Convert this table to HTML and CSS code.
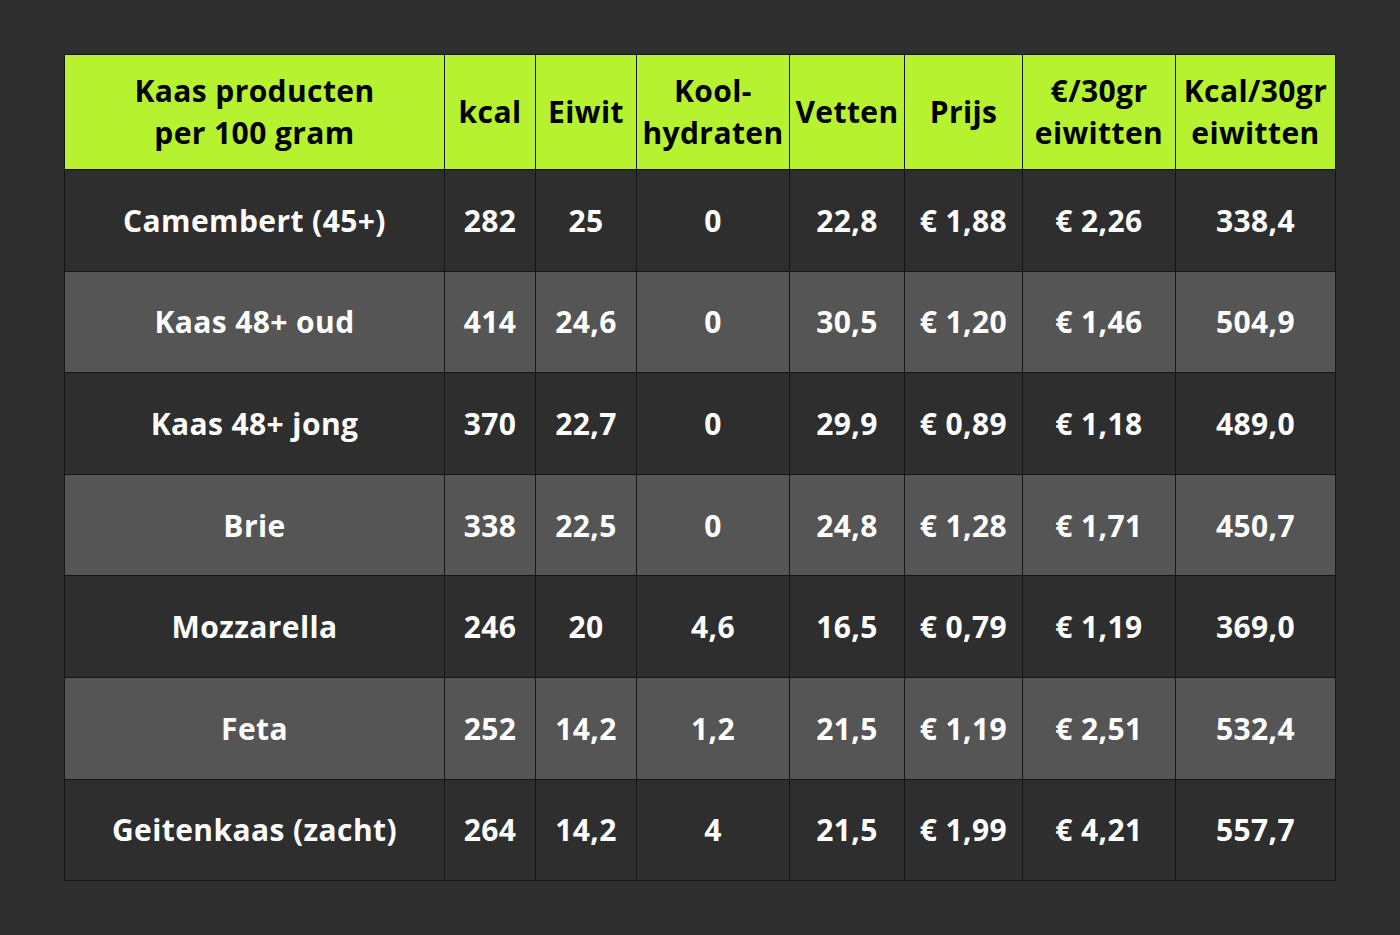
FILE: index.html
```html
<!DOCTYPE html>
<html lang="nl">
<head>
<meta charset="utf-8">
<title>Kaas producten</title>
<link rel="stylesheet" href="styles.css">
</head>
<body>
<div class="page">
<table class="cheese">
<colgroup>
<col class="c1"><col class="c2"><col class="c3"><col class="c4"><col class="c5"><col class="c6"><col class="c7"><col class="c8">
</colgroup>
<thead>
<tr>
<th>Kaas producten<br>per 100 gram</th>
<th>kcal</th>
<th>Eiwit</th>
<th>Kool-<br>hydraten</th>
<th>Vetten</th>
<th>Prijs</th>
<th>€/30gr<br>eiwitten</th>
<th>Kcal/30gr<br>eiwitten</th>
</tr>
</thead>
<tbody>
<tr class="dark"><td>Camembert (45+)</td><td>282</td><td>25</td><td>0</td><td>22,8</td><td>€ 1,88</td><td>€ 2,26</td><td>338,4</td></tr>
<tr class="light"><td>Kaas 48+ oud</td><td>414</td><td>24,6</td><td>0</td><td>30,5</td><td>€ 1,20</td><td>€ 1,46</td><td>504,9</td></tr>
<tr class="dark"><td>Kaas 48+ jong</td><td>370</td><td>22,7</td><td>0</td><td>29,9</td><td>€ 0,89</td><td>€ 1,18</td><td>489,0</td></tr>
<tr class="light"><td>Brie</td><td>338</td><td>22,5</td><td>0</td><td>24,8</td><td>€ 1,28</td><td>€ 1,71</td><td>450,7</td></tr>
<tr class="dark"><td>Mozzarella</td><td>246</td><td>20</td><td>4,6</td><td>16,5</td><td>€ 0,79</td><td>€ 1,19</td><td>369,0</td></tr>
<tr class="light"><td>Feta</td><td>252</td><td>14,2</td><td>1,2</td><td>21,5</td><td>€ 1,19</td><td>€ 2,51</td><td>532,4</td></tr>
<tr class="dark"><td>Geitenkaas (zacht)</td><td>264</td><td>14,2</td><td>4</td><td>21,5</td><td>€ 1,99</td><td>€ 4,21</td><td>557,7</td></tr>
</tbody>
</table>
</div>
</body>
</html>
```

FILE: styles.css
```css
html, body {
  margin: 0;
  padding: 0;
  background: #2e2e2e;
}
body {
  font-family: "Open Sans", "Liberation Sans", sans-serif;
  font-weight: 700;
}
.page {
  width: 1400px;
  height: 935px;
  padding: 54px 0 0 64px;
  box-sizing: border-box;
}
.cheese {
  border-collapse: collapse;
  table-layout: fixed;
  width: 1271px;
}
.c1 { width: 380px; }
.c2 { width: 91px; }
.c3 { width: 101px; }
.c4 { width: 153px; }
.c5 { width: 115px; }
.c6 { width: 118px; }
.c7 { width: 153px; }
.c8 { width: 160px; }
.cheese th, .cheese td {
  border: 1px solid #151515;
  text-align: center;
  vertical-align: middle;
  padding: 0;
  white-space: nowrap;
  overflow: visible;
  letter-spacing: 0.4px;
}
.cheese thead tr {
  height: 115px;
}
.cheese th {
  background: #b6f22f;
  color: #000;
  font-size: 30px;
  line-height: 42px;
  font-weight: 700;
}
.cheese tbody tr {
  height: 101.6px;
}
.cheese td {
  color: #fff;
  font-size: 30px;
}
.dark td { background: #2e2e2e; }
.light td { background: #555555; }
```
